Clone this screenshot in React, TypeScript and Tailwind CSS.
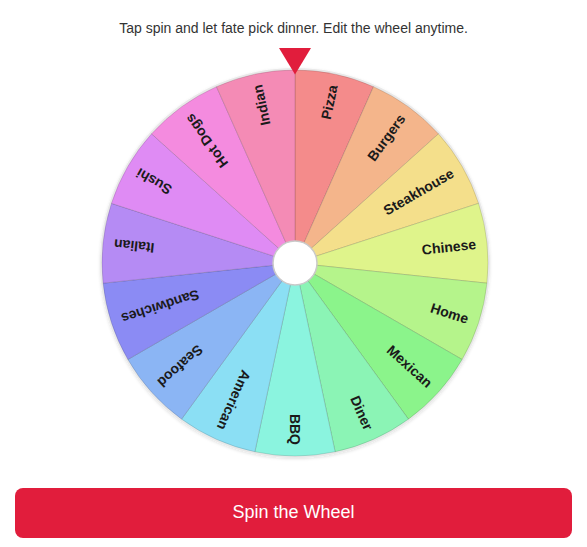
import React from "react";

const FOODS = [
  "Pizza",
  "Burgers",
  "Steakhouse",
  "Chinese",
  "Home",
  "Mexican",
  "Diner",
  "BBQ",
  "American",
  "Seafood",
  "Sandwiches",
  "Italian",
  "Sushi",
  "Hot Dogs",
  "Indian",
];

const SIZE = 400;
const C = SIZE / 2;
const R = 193;

function polar(angleDeg: number, r: number) {
  // 0deg points straight up, increasing clockwise
  const a = ((angleDeg - 90) * Math.PI) / 180;
  return [C + r * Math.cos(a), C + r * Math.sin(a)];
}

function Wheel() {
  const step = 360 / FOODS.length;
  return (
    <svg width={SIZE} height={SIZE} viewBox={`0 0 ${SIZE} ${SIZE}`}>
      <defs>
        <filter id="rim" x="-10%" y="-10%" width="120%" height="120%">
          <feDropShadow dx="0" dy="1" stdDeviation="1.5" floodColor="#000" floodOpacity="0.12" />
        </filter>
      </defs>
      <circle cx={C} cy={C} r={R + 2} fill="#e9e9e9" filter="url(#rim)" />
      {FOODS.map((name, i) => {
        const start = i * step;
        const end = start + step;
        const [x1, y1] = polar(start, R);
        const [x2, y2] = polar(end, R);
        const d = `M ${C} ${C} L ${x1} ${y1} A ${R} ${R} 0 0 1 ${x2} ${y2} Z`;
        return (
          <path
            key={name}
            d={d}
            fill={`hsl(${i * 24}, 82%, 75%)`}
            stroke="rgba(0,0,0,0.13)"
            strokeWidth={1}
          />
        );
      })}
      {FOODS.map((name, i) => {
        const mid = i * step + step / 2;
        return (
          <text
            key={name + "-label"}
            x={C + 182}
            y={C}
            transform={`rotate(${mid - 90} ${C} ${C})`}
            textAnchor="end"
            dominantBaseline="central"
            fontFamily="'Liberation Sans', Arial, sans-serif"
            fontWeight={700}
            fontSize={14}
            fill="#1a1a1a"
          >
            {name}
          </text>
        );
      })}
      <circle cx={C} cy={C} r={22} fill="#ffffff" stroke="#c9c9c9" strokeWidth={1.5} />
    </svg>
  );
}

export default function App() {
  return (
    <div
      className="flex flex-col items-center bg-white w-[587px] h-[547px]"
      style={{ fontFamily: "'Liberation Sans', Arial, sans-serif" }}
    >
      <p className="pt-[18px] text-[14px] leading-[20px] text-[#333333]">
        Tap spin and let fate pick dinner. Edit the wheel anytime.
      </p>
      <div className="relative mt-[24.5px] ml-[2px]">
        <Wheel />
        <svg
          className="absolute left-[184.5px] top-[-15px]"
          width="32"
          height="27"
          viewBox="0 0 32 27"
        >
          <polygon points="0,0 32,0 16,26.5" fill="#e11d3c" />
        </svg>
      </div>
      <button className="mt-[25px] w-[557px] h-[50px] rounded-lg bg-[#e11d3c] text-white text-[18px]">
        Spin the Wheel
      </button>
    </div>
  );
}
